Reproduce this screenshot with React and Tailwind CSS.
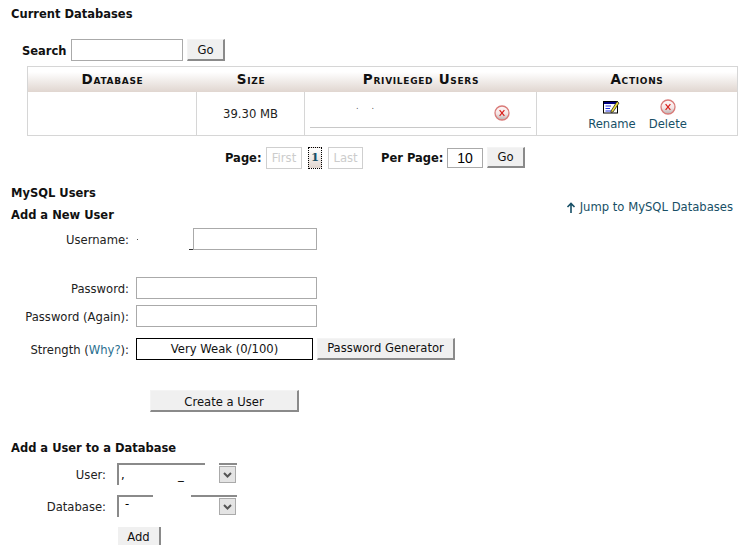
function DeleteIcon() {
  return (
    <svg width="16" height="16" viewBox="0 0 16 16" className="block">
      <defs>
        <linearGradient id="delBg" x1="0" y1="0" x2="0" y2="1">
          <stop offset="0%" stopColor="#fff8f8" />
          <stop offset="55%" stopColor="#f5e6e6" />
          <stop offset="100%" stopColor="#b9b0b0" />
        </linearGradient>
      </defs>
      <circle cx="8" cy="8" r="7" fill="url(#delBg)" stroke="#d97a78" strokeWidth="1.3" />
      <path d="M5.6 5.2 L10.4 10.8 M10.4 5.2 L5.6 10.8" stroke="#d8201c" strokeWidth="1.2" />
    </svg>
  );
}

function RenameIcon() {
  return (
    <svg width="17" height="15" viewBox="0 0 17 15" className="block">
      <rect x="0.5" y="2.5" width="14" height="11.5" fill="#fff" stroke="#000" />
      <rect x="1" y="3" width="13" height="2" fill="#000080" />
      <path d="M2.5 7H8M2.5 9.5H7M2.5 12H9" stroke="#1f2fe0" strokeWidth="1" />
      <path d="M8 12 L14 2.5 L16 4 L10 13 L8 13.5Z" fill="#f5e23a" stroke="#222" strokeWidth="0.8" />
    </svg>
  );
}

function Btn({ className, children }) {
  return (
    <button className={"flex items-center justify-center pt-[2px] bg-[#f0f0f0] border-t border-l border-t-[#f4f4f4] border-l-[#f4f4f4] border-r-2 border-b-2 border-r-[#8a8a8a] border-b-[#8a8a8a] text-[11.6px] text-[#111] " + className}>
      {children}
    </button>
  );
}

function Field({ className }) {
  return <div className={"h-[22px] bg-white border border-[#aaaaaa] " + className} />;
}

function FakeSelect({ children, gaps }) {
  return (
    <div className="relative flex h-[22px] w-[120px] border-t-2 border-l-2 border-t-[#8a8a8a] border-l-[#8a8a8a] bg-white">
      <div className="relative flex-1 text-[11.6px] leading-[18px] text-black">{children}</div>
      <div className="flex items-center justify-center w-[17px] h-[17px] mt-px mr-px bg-[#e4e4e4] border border-[#aaaaaa]">
        <svg width="9" height="6" viewBox="0 0 9 6"><path d="M1 1 L4.5 4.5 L8 1" fill="none" stroke="#555" strokeWidth="2" /></svg>
      </div>
      {gaps}
    </div>
  );
}

function Label({ children }) {
  return <div className="w-[129px] pt-[3px] text-right text-[11.6px] text-[#222]">{children}</div>;
}

export default function App() {
  const thClass = "text-center text-[13.5px] font-bold text-[#111] [font-variant:small-caps] tracking-[0.7px] flex items-center justify-center";
  const heading = "h-[13px] leading-[13px] text-[11.5px] font-bold";

  return (
    <div className="w-[748px] h-[545px] overflow-hidden bg-white pt-[8px] font-['DejaVu_Sans',Verdana,sans-serif] text-[11.6px] text-[#111]">
      <h2 className={"ml-[11px] " + heading}>Current Databases</h2>

      {/* search */}
      <div className="flex items-center mt-[18px] ml-[22px] h-[22px]">
        <span className="w-[49px] pt-[3px] font-bold text-[11.5px]">Search</span>
        <Field className="w-[112px]" />
        <Btn className="w-[38px] h-[22px] ml-[4px]">Go</Btn>
      </div>

      {/* database table */}
      <div className="ml-[27px] mt-[5px] w-[711px] border border-[#d6d6d6]">
        <div className="grid grid-cols-[169px_108px_232px_1fr] h-[25px] bg-gradient-to-b from-white from-20% to-[#e0d6d0]">
          <div className={thClass}>Database</div>
          <div className={thClass}>Size</div>
          <div className={thClass}>Privileged Users</div>
          <div className={thClass}>Actions</div>
        </div>
        <div className="grid grid-cols-[169px_108px_232px_1fr] h-[43px]">
          <div className="border-r border-[#d6d6d6]" />
          <div className="flex items-center justify-center pt-[3px] border-r border-[#d6d6d6] text-[#222]">39.30 MB</div>
          <div className="relative border-r border-[#d6d6d6] px-[5px]">
            <div className="flex items-center justify-end h-[36px] pt-[6px] border-b border-[#c8c8c8] pr-[21px]">
              <span className="absolute left-[51px] top-[11px] text-[8px] leading-[8px] text-[#555] tracking-[13px]">..</span>
              <DeleteIcon />
            </div>
          </div>
          <div className="flex items-start justify-center gap-[13px] pt-[7px] pl-[1px] text-[11.6px] text-[#174f66]">
            <div className="flex flex-col items-center gap-[2px]">
              <RenameIcon />
              <span>Rename</span>
            </div>
            <div className="flex flex-col items-center gap-[1px]">
              <DeleteIcon />
              <span>Delete</span>
            </div>
          </div>
        </div>
      </div>

      {/* pagination */}
      <div className="flex items-center mt-[11px] ml-[225px] h-[22px]">
        <span className="w-[41px] pt-[2px] font-bold text-[11.5px]">Page:</span>
        <span className="w-[36px] h-[22px] flex items-center justify-center pt-[1px] border border-[#cfcfcf] text-[#cccccc]">First</span>
        <span className="ml-[6px] w-[14px] h-[22px] flex items-center justify-center border border-dotted border-black bg-gradient-to-b from-white to-[#e0d6d0] font-bold font-['DejaVu_Serif',serif] text-[#174f66]">1</span>
        <span className="ml-[6px] w-[35px] h-[22px] flex items-center justify-center pt-[1px] border border-[#cfcfcf] text-[#cccccc]">Last</span>
        <span className="ml-[18px] w-[66px] pt-[2px] font-bold text-[11.5px]">Per Page:</span>
        <div className="w-[36px] h-[20px] flex items-center justify-center bg-white border border-[#aaaaaa] font-['Liberation_Sans',sans-serif] text-[14px] text-black">10</div>
        <Btn className="w-[38px] h-[21px] ml-[4px] -mt-[1px]">Go</Btn>
      </div>

      {/* add new user */}
      <div className="relative mt-[18px] pl-[11px]">
        <h2 className={heading}>MySQL Users</h2>
        <h2 className={"mt-[9px] " + heading}>Add a New User</h2>
        <a className="absolute right-[15px] top-[12px] flex items-center gap-[4px] text-[11.6px] text-[#174f66]">
          <svg width="10" height="12" viewBox="0 0 10 12"><path d="M5 11V2M1.5 5L5 1.5L8.5 5" fill="none" stroke="#174f66" strokeWidth="1.6" /></svg>
          <span>Jump to MySQL Databases</span>
        </a>
      </div>

      <div className="flex items-center mt-[6px] h-[22px]">
        <Label>Username:</Label>
        <span className="relative ml-[7px] w-[57px] h-[22px]">
          <span className="absolute left-[1px] top-[11px] w-px h-px bg-[#555]" />
          <span className="absolute left-[53px] bottom-0 w-[4px] h-px bg-[#333]" />
        </span>
        <Field className="w-[124px]" />
      </div>
      <div className="flex items-center mt-[27px] h-[22px]">
        <Label>Password:</Label>
        <Field className="ml-[7px] w-[181px]" />
      </div>
      <div className="flex items-center mt-[6px] h-[22px]">
        <Label>Password (Again):</Label>
        <Field className="ml-[7px] w-[181px]" />
      </div>
      <div className="flex items-center mt-[11px] h-[22px]">
        <Label>
          Strength (<span className="text-[#2a6f8f]">Why?</span>):
        </Label>
        <div className="ml-[7px] w-[177px] h-[22px] flex items-center justify-center pt-[2px] bg-white border border-black">Very Weak (0/100)</div>
        <Btn className="ml-[4px] w-[138px] h-[22px] -mt-[1px]">Password Generator</Btn>
      </div>

      <Btn className="ml-[150px] mt-[30px] w-[149px] h-[22px] pt-[4px]">Create a User</Btn>

      <h2 className={"ml-[11px] mt-[30px] " + heading}>Add a User to a Database</h2>

      <div className="flex items-center mt-[8px] h-[22px]">
        <div className="w-[106px] pt-[4px] text-right text-[#222]">User:</div>
        <div className="ml-[11px]">
          <FakeSelect gaps={<span className="absolute left-[86px] -top-[2px] w-[14px] h-[2px] bg-white" />}>
            <span className="absolute left-[2px] top-[1px]">,</span>
            <span className="absolute left-[59px] top-[1px]">_</span>
          </FakeSelect>
        </div>
      </div>
      <div className="flex items-center mt-[10px] h-[22px]">
        <div className="w-[106px] pt-[3px] text-right text-[#222]">Database:</div>
        <div className="ml-[11px]">
          <FakeSelect gaps={<span className="absolute left-[34px] -top-[2px] w-[38px] h-[2px] bg-white" />}>
            <span className="absolute left-[6px] -top-[2px]">-</span>
          </FakeSelect>
        </div>
      </div>
      <button className="block ml-[118px] mt-[10px] w-[43px] h-[22px] bg-[#f0f0f0] border-r-2 border-[#8a8a8a] text-[11.6px] text-[#111]">Add</button>
    </div>
  );
}
